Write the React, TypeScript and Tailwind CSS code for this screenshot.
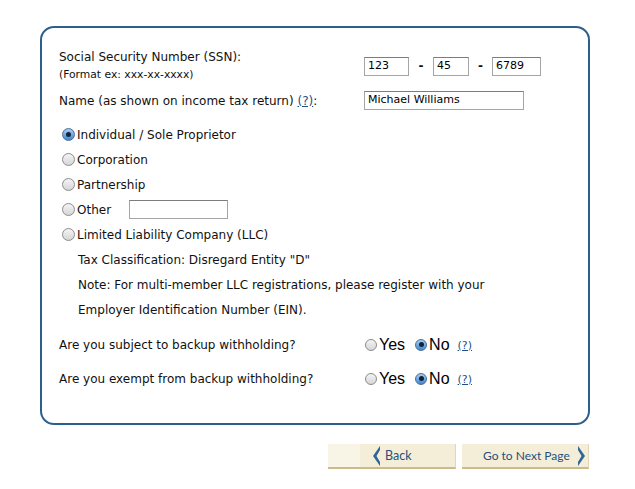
import React from 'react';

const Radio = ({ checked = false, small = false }: { checked?: boolean; small?: boolean }) => (
  <span
    className={`inline-flex shrink-0 items-center justify-center rounded-full border ${
      small ? 'h-[12px] w-[12px]' : 'h-[13px] w-[13px]'
    } ${
      checked
        ? 'border-[#4a6f9a] bg-gradient-to-b from-[#a9cdf0] to-[#3f86d0]'
        : 'border-[#8c8c8c] bg-gradient-to-b from-[#f4f4f4] to-[#d6d6d6]'
    }`}
  >
    {checked && <span className="h-[5px] w-[5px] rounded-full bg-[#10243a]" />}
  </span>
);

const TextBox = ({ value = '', className = '' }: { value?: string; className?: string }) => (
  <div
    className={`flex h-[19px] items-center border border-[#a5a5a5] border-t-[#7d7d7d] bg-white px-[3px] text-[11px] text-black ${className}`}
  >
    {value}
  </div>
);

const Help = ({ className = '' }: { className?: string }) => (
  <a className={`text-[#1d4f86] underline ${className}`}>(?)</a>
);

const YesNo = () => (
  <div className="flex items-center font-['Liberation_Sans',Arial,sans-serif] text-[16px] text-black">
    <Radio small />
    <span className="ml-[2px]">Yes</span>
    <span className="ml-[10px] flex">
      <Radio checked small />
    </span>
    <span className="ml-[2px]">No</span>
    <Help className="ml-[8px] mt-[3px] font-['DejaVu_Sans',Verdana,sans-serif] text-[11px]" />
  </div>
);

const Chevron = ({ dir }: { dir: 'left' | 'right' }) => (
  <svg width="8" height="20" viewBox="0 0 8 20" className="shrink-0">
    {dir === 'left' ? (
      <path d="M7 0 L0 10 L7 20 L7 16 L3.5 10 L7 4 Z" fill="#2f6798" />
    ) : (
      <path d="M1 0 L8 10 L1 20 L1 16 L4.5 10 L1 4 Z" fill="#2f6798" />
    )}
  </svg>
);

export default function App() {
  const entityTypes = [
    'Individual / Sole Proprietor',
    'Corporation',
    'Partnership',
    'Other',
    'Limited Liability Company (LLC)',
  ];

  return (
    <div className="min-h-[489px] w-[635px] bg-white font-['DejaVu_Sans',Verdana,sans-serif] text-[12px] text-[#111]">
      <div className="pt-[26px] pl-[40px]">
        <div className="h-[399px] w-[550px] rounded-[14px] border-2 border-[#2d5f8b] pl-[17px] pt-[20px]">
          {/* SSN */}
          <div className="flex">
            <div className="w-[305px]">
              <div className="h-[17px] leading-[18px]">Social Security Number (SSN):</div>
              <div className="mt-[3px] h-[12px] text-[10.75px] leading-[13px]">(Format ex: xxx-xx-xxxx)</div>
            </div>
            <div className="flex items-center pt-[4px]">
              <TextBox value="123" className="w-[45px]" />
              <span className="w-[24px] text-center font-bold">-</span>
              <TextBox value="45" className="w-[36px]" />
              <span className="w-[23px] text-center font-bold">-</span>
              <TextBox value="6789" className="w-[49px]" />
            </div>
          </div>

          {/* Name */}
          <div className="mt-[10px] flex h-[21px] items-center">
            <div className="w-[305px] whitespace-nowrap">
              Name (as shown on income tax return) <Help />:
            </div>
            <TextBox value="Michael Williams" className="w-[160px]" />
          </div>

          {/* Entity type */}
          <div className="mt-[11px]">
            {entityTypes.map((t, i) => (
              <div key={t} className="flex h-[25px] items-center pl-[3px]">
                <Radio checked={i === 0} />
                <span className="ml-[2px]">{t}</span>
                {t === 'Other' && <TextBox className="ml-[18px] w-[99px]" />}
              </div>
            ))}
            <div className="pl-[19px]">
              <div className="flex h-[25px] items-center">Tax Classification: Disregard Entity "D"</div>
              <div className="flex h-[25px] items-center whitespace-nowrap">
                Note: For multi-member LLC registrations, please register with your
              </div>
              <div className="flex h-[25px] items-center">Employer Identification Number (EIN).</div>
            </div>
          </div>

          {/* Backup withholding */}
          <div className="mt-[10px] flex h-[25px] items-center">
            <div className="w-[306px]">Are you subject to backup withholding?</div>
            <YesNo />
          </div>
          <div className="mt-[9px] flex h-[25px] items-center">
            <div className="w-[306px]">Are you exempt from backup withholding?</div>
            <YesNo />
          </div>
        </div>
      </div>

      {/* Navigation */}
      <div className="mt-[19px] flex gap-[6px] pl-[328px] font-['Lato','Open_Sans',sans-serif] text-[12px] text-[#24507d]">
        <button className="flex h-[25px] w-[128px] items-center border-b-2 border-r border-b-[#cdbb8c] border-r-[#e2d6b4] bg-gradient-to-r from-[#f8f4e6] from-[25%] to-[#f4eed9] to-[25%] pl-[45px] pt-[1px]">
          <Chevron dir="left" />
          <span className="ml-[4px] text-[12.5px]">Back</span>
        </button>
        <button className="flex h-[25px] w-[127px] items-center whitespace-nowrap border-b-2 border-r border-b-[#cdbb8c] border-r-[#e2d6b4] bg-[#f4eed9] pl-[21px] pt-[1px]">
          <span>Go to Next Page</span>
          <span className="ml-[7px] flex">
            <Chevron dir="right" />
          </span>
        </button>
      </div>
    </div>
  );
}
